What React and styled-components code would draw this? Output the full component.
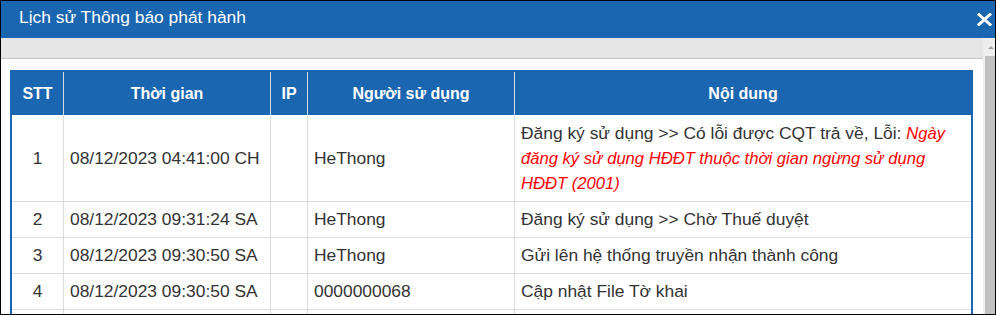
import styled, { createGlobalStyle } from 'styled-components';

const GlobalStyle = createGlobalStyle`
    html, body {
        margin: 0;
        padding: 0;
        background: #fff;
    }
    body {
        font-family: "Liberation Sans", Arial, sans-serif;
    }
`

const BLUE = '#1a66b0'

const rows = [
    {
        stt: 1,
        time: '08/12/2023 04:41:00 CH',
        ip: '',
        user: 'HeThong',
        text: 'Đăng ký sử dụng >> Có lỗi được CQT trả về, Lỗi: ',
        error: 'Ngày đăng ký sử dụng HĐĐT thuộc thời gian ngừng sử dụng HĐĐT (2001)',
    },
    { stt: 2, time: '08/12/2023 09:31:24 SA', ip: '', user: 'HeThong', text: 'Đăng ký sử dụng >> Chờ Thuế duyệt' },
    { stt: 3, time: '08/12/2023 09:30:50 SA', ip: '', user: 'HeThong', text: 'Gửi lên hệ thống truyền nhận thành công' },
    { stt: 4, time: '08/12/2023 09:30:50 SA', ip: '', user: '0000000068', text: 'Cập nhật File Tờ khai' },
]

const App = () => {
    return (
        <>
            <GlobalStyle />
            <Dialog>
                <TitleBar>
                    <Title>Lịch sử Thông báo phát hành</Title>
                    <CloseButton aria-label="Đóng">
                        <svg width="15" height="13" viewBox="0 0 15 13">
                            <path d="M2 1.5 L13 11.5 M13 1.5 L2 11.5" stroke="#fff" strokeWidth="3" strokeLinecap="square" />
                        </svg>
                    </CloseButton>
                </TitleBar>
                <Body>
                    <Content>
                        <Toolbar />
                        <TableWrap>
                            <Grid>
                                <HeadRow>
                                    <HeadCell>STT</HeadCell>
                                    <HeadCell>Thời gian</HeadCell>
                                    <HeadCell>IP</HeadCell>
                                    <HeadCell>Người sử dụng</HeadCell>
                                    <HeadCell>Nội dung</HeadCell>
                                </HeadRow>
                                <RowGroup>
                                    {rows.map((r) => (
                                        <Row key={r.stt}>
                                            <Cell $center>{r.stt}</Cell>
                                            <Cell>{r.time}</Cell>
                                            <Cell>{r.ip}</Cell>
                                            <Cell>{r.user}</Cell>
                                            <Cell $wrap>
                                                {r.text}
                                                {r.error && <ErrorText>{r.error}</ErrorText>}
                                            </Cell>
                                        </Row>
                                    ))}
                                    {/* next row, only its top edge is in view */}
                                    <Row>
                                        <Cell />
                                        <Cell />
                                        <Cell />
                                        <Cell />
                                        <Cell />
                                    </Row>
                                </RowGroup>
                            </Grid>
                        </TableWrap>
                    </Content>
                    <Scrollbar>
                        <ScrollArrow />
                        <ScrollThumb />
                    </Scrollbar>
                </Body>
            </Dialog>
        </>
    )
}

const Dialog = styled.div`
    width: 996px;
    height: 315px;
    box-sizing: border-box;
    border: 1px solid #000;
    overflow: hidden;
    display: flex;
    flex-direction: column;
    background: #fff;
`

const TitleBar = styled.div`
    height: 37px;
    flex: none;
    background: ${BLUE};
    display: flex;
    align-items: flex-start;
    justify-content: space-between;
`

const Title = styled.h1`
    margin: 0;
    padding: 5px 0 0 18px;
    font-size: 17.4px;
    font-weight: normal;
    line-height: 22px;
    color: #fff;
`

const CloseButton = styled.button`
    border: 0;
    background: none;
    padding: 12px 3px 0 0;
    margin: 0;
    line-height: 0;
    cursor: pointer;
`

const Body = styled.div`
    flex: 1;
    display: flex;
    min-height: 0;
`

const Content = styled.div`
    flex: 1;
    display: flex;
    flex-direction: column;
`

const Toolbar = styled.div`
    height: 20px;
    flex: none;
    background: #e6e6e6;
    border-bottom: 1px solid #c4c4c4;
`

const TableWrap = styled.div`
    padding: 11px 10px 0 9px;
`

const Grid = styled.div`
    border: 2px solid ${BLUE};
    border-bottom: 0;
    color: #333;
    font-size: 17.4px;
`

const columns = '51px 207px 37px 207px 1fr'

const HeadRow = styled.div`
    display: grid;
    grid-template-columns: ${columns};
    background: ${BLUE};
    height: 43px;
`

const HeadCell = styled.div`
    display: flex;
    align-items: center;
    justify-content: center;
    color: #fff;
    font-weight: bold;
    font-size: 16px;
    & + & {
        border-left: 1px solid #d6dce4;
    }
`

const RowGroup = styled.div`
    padding-top: 1px;
`

const Row = styled.div`
    display: grid;
    grid-template-columns: ${columns};
    min-height: 35px;
    border-bottom: 1px solid #dcdcdc;
`

const Cell = styled.div`
    padding: 5px 6px;
    line-height: 25px;
    display: flex;
    align-items: ${(p) => (p.$wrap ? 'flex-start' : 'center')};
    justify-content: ${(p) => (p.$center ? 'center' : 'flex-start')};
    white-space: ${(p) => (p.$wrap ? 'normal' : 'nowrap')};
    ${(p) => p.$wrap && 'display: block;'}
    & + & {
        border-left: 1px solid #dcdcdc;
    }
`

const ErrorText = styled.i`
    color: #ff0000;
    font-size: 16.6px;
`

const Scrollbar = styled.div`
    width: 12px;
    flex: none;
    background: #eeeeee;
    display: flex;
    flex-direction: column;
`

const ScrollArrow = styled.div`
    height: 18px;
    flex: none;
    position: relative;
    &::after {
        content: '';
        position: absolute;
        left: 5px;
        top: 8px;
        border-left: 3px solid transparent;
        border-right: 3px solid transparent;
        border-bottom: 3px solid #a3a3a3;
    }
`

const ScrollThumb = styled.div`
    flex: 1;
    margin-left: 2px;
    background: #c1c1c1;
`

export default App
